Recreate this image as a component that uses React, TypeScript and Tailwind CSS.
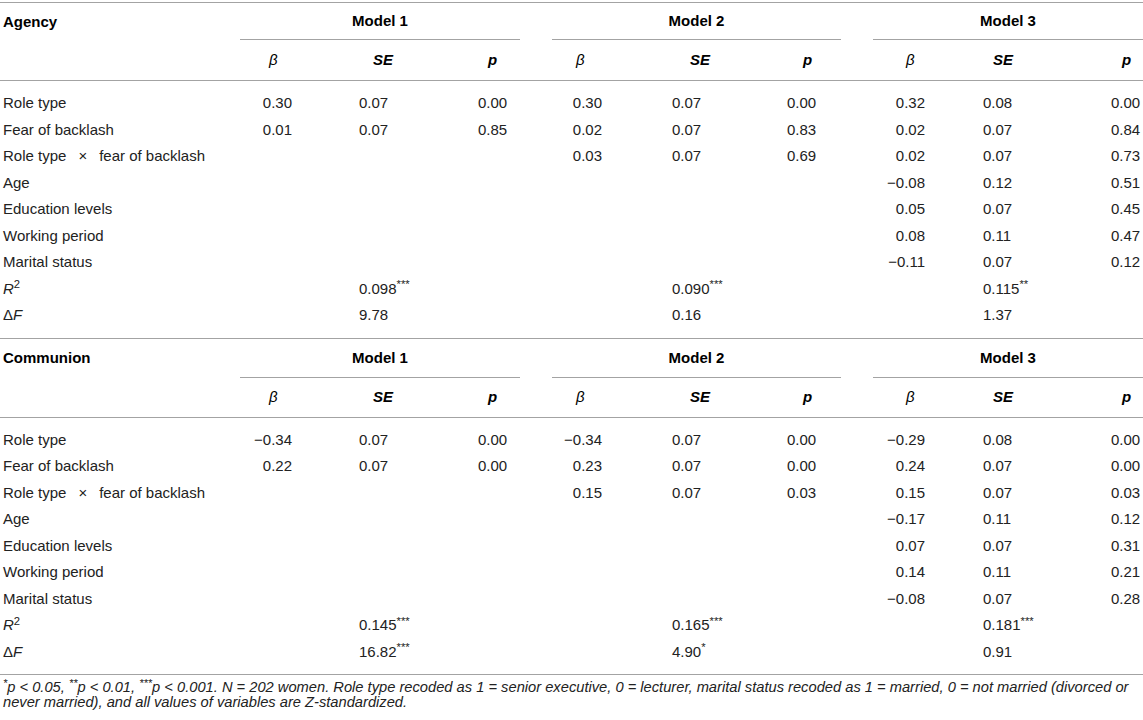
import React from 'react'

type Col = { w: number; align: 'left' | 'right'; pad: string; hdr: string }

// value/header offsets measured off the reference, per sub-column
const cols: Col[] = [
  { w: 60, align: 'right', pad: 'pr-[8px]', hdr: 'pl-[29px]' },
  { w: 160, align: 'left', pad: 'pl-[59px]', hdr: 'pl-[73px]' },
  { w: 80, align: 'left', pad: 'pl-[18px]', hdr: 'pl-[28px]' },
  { w: 70, align: 'right', pad: 'pr-[8px]', hdr: 'pl-[36px]' },
  { w: 150, align: 'left', pad: 'pl-[62px]', hdr: 'pl-[80px]' },
  { w: 100, align: 'left', pad: 'pl-[27px]', hdr: 'pl-[43px]' },
  { w: 75, align: 'right', pad: 'pr-[10px]', hdr: 'pl-[46px]' },
  { w: 145, align: 'left', pad: 'pl-[48px]', hdr: 'pl-[58px]' },
  { w: 63, align: 'left', pad: 'pl-[31px]', hdr: 'pl-[42px]' },
]

const gridCls = 'grid grid-cols-[240px_60px_160px_80px_70px_150px_100px_75px_145px_63px]'

type Cell = string | { v: string; s: string } | null
type Row = { label: React.ReactNode; cells: Cell[] }

const R2 = (
  <span>
    <i>R</i>
    <sup className="not-italic">2</sup>
  </span>
)
const DF = (
  <span>
    Δ<i>F</i>
  </span>
)
const Interaction = (
  <span>
    Role type<span className="mx-[12px]">×</span>fear of backlash
  </span>
)

const _ = null

const agency: Row[] = [
  { label: 'Role type', cells: ['0.30', '0.07', '0.00', '0.30', '0.07', '0.00', '0.32', '0.08', '0.00'] },
  { label: 'Fear of backlash', cells: ['0.01', '0.07', '0.85', '0.02', '0.07', '0.83', '0.02', '0.07', '0.84'] },
  { label: Interaction, cells: [_, _, _, '0.03', '0.07', '0.69', '0.02', '0.07', '0.73'] },
  { label: 'Age', cells: [_, _, _, _, _, _, '−0.08', '0.12', '0.51'] },
  { label: 'Education levels', cells: [_, _, _, _, _, _, '0.05', '0.07', '0.45'] },
  { label: 'Working period', cells: [_, _, _, _, _, _, '0.08', '0.11', '0.47'] },
  { label: 'Marital status', cells: [_, _, _, _, _, _, '−0.11', '0.07', '0.12'] },
  { label: R2, cells: [_, { v: '0.098', s: '***' }, _, _, { v: '0.090', s: '***' }, _, _, { v: '0.115', s: '**' }, _] },
  { label: DF, cells: [_, '9.78', _, _, '0.16', _, _, '1.37', _] },
]

const communion: Row[] = [
  { label: 'Role type', cells: ['−0.34', '0.07', '0.00', '−0.34', '0.07', '0.00', '−0.29', '0.08', '0.00'] },
  { label: 'Fear of backlash', cells: ['0.22', '0.07', '0.00', '0.23', '0.07', '0.00', '0.24', '0.07', '0.00'] },
  { label: Interaction, cells: [_, _, _, '0.15', '0.07', '0.03', '0.15', '0.07', '0.03'] },
  { label: 'Age', cells: [_, _, _, _, _, _, '−0.17', '0.11', '0.12'] },
  { label: 'Education levels', cells: [_, _, _, _, _, _, '0.07', '0.07', '0.31'] },
  { label: 'Working period', cells: [_, _, _, _, _, _, '0.14', '0.11', '0.21'] },
  { label: 'Marital status', cells: [_, _, _, _, _, _, '−0.08', '0.07', '0.28'] },
  { label: R2, cells: [_, { v: '0.145', s: '***' }, _, _, { v: '0.165', s: '***' }, _, _, { v: '0.181', s: '***' }, _] },
  { label: DF, cells: [_, { v: '16.82', s: '***' }, _, _, { v: '4.90', s: '*' }, _, _, '0.91', _] },
]

const Rule = () => <div className="h-px bg-[#a3a3a3]" />

const ModelHeader = ({ title, h }: { title: string; h: string }) => (
  <div className={`flex ${h}`}>
    <div className="w-[240px] pl-[3px] flex items-center font-bold text-black">{title}</div>
    <div className="w-[280px] flex items-center justify-center font-bold text-black border-b border-[#a3a3a3]">Model 1</div>
    <div className="w-[289px] ml-[32px] flex items-center justify-center font-bold text-black border-b border-[#a3a3a3]">Model 2</div>
    <div className="w-[270px] ml-[32px] flex items-center justify-center font-bold text-black border-b border-[#a3a3a3]">Model 3</div>
  </div>
)

const SubHeader = ({ h }: { h: string }) => (
  <div className={`${gridCls} ${h}`}>
    <div />
    {cols.map((c, i) => (
      <div key={i} className={`flex items-center ${c.hdr} text-black`}>
        {i % 3 === 0 ? <i className="font-normal">β</i> : i % 3 === 1 ? <b><i>SE</i></b> : <b><i>p</i></b>}
      </div>
    ))}
  </div>
)

const Body = ({ rows }: { rows: Row[] }) => (
  <div className="py-[9px]">
    {rows.map((r, ri) => (
      <div key={ri} className={`${gridCls} h-[26.5px] items-center`}>
        <div className="pl-[3px] whitespace-nowrap">{r.label}</div>
        {r.cells.map((c, i) => (
          <div key={i} className={`whitespace-nowrap ${cols[i].pad} ${cols[i].align === 'right' ? 'text-right' : 'text-left'}`}>
            {c === null ? '' : typeof c === 'string' ? c : (
              <span>
                {c.v}
                <sup>{c.s}</sup>
              </span>
            )}
          </div>
        ))}
      </div>
    ))}
  </div>
)

export default function App() {
  return (
    <div className="w-[1143px] h-[720px] overflow-hidden bg-white pt-[2px] text-[15px] leading-[18px] text-[#222] font-['Liberation_Sans',Arial,sans-serif]">
      <Rule />
      <ModelHeader title="Agency" h="h-[37px]" />
      <SubHeader h="h-[40px]" />
      <Rule />
      <Body rows={agency} />
      <Rule />
      <ModelHeader title="Communion" h="h-[39px]" />
      <SubHeader h="h-[39px]" />
      <Rule />
      <Body rows={communion} />
      <Rule />
      <div className="pt-[5px] pl-[3px] text-[14.7px] leading-[15px] italic whitespace-nowrap">
        <div>
          <sup>*</sup>p &lt; 0.05, <sup>**</sup>p &lt; 0.01, <sup>***</sup>p &lt; 0.001. N = 202 women. Role type recoded as 1 = senior executive, 0 = lecturer, marital status recoded as 1 = married, 0 = not married (divorced or
        </div>
        <div>never married), and all values of variables are Z-standardized.</div>
      </div>
    </div>
  )
}
